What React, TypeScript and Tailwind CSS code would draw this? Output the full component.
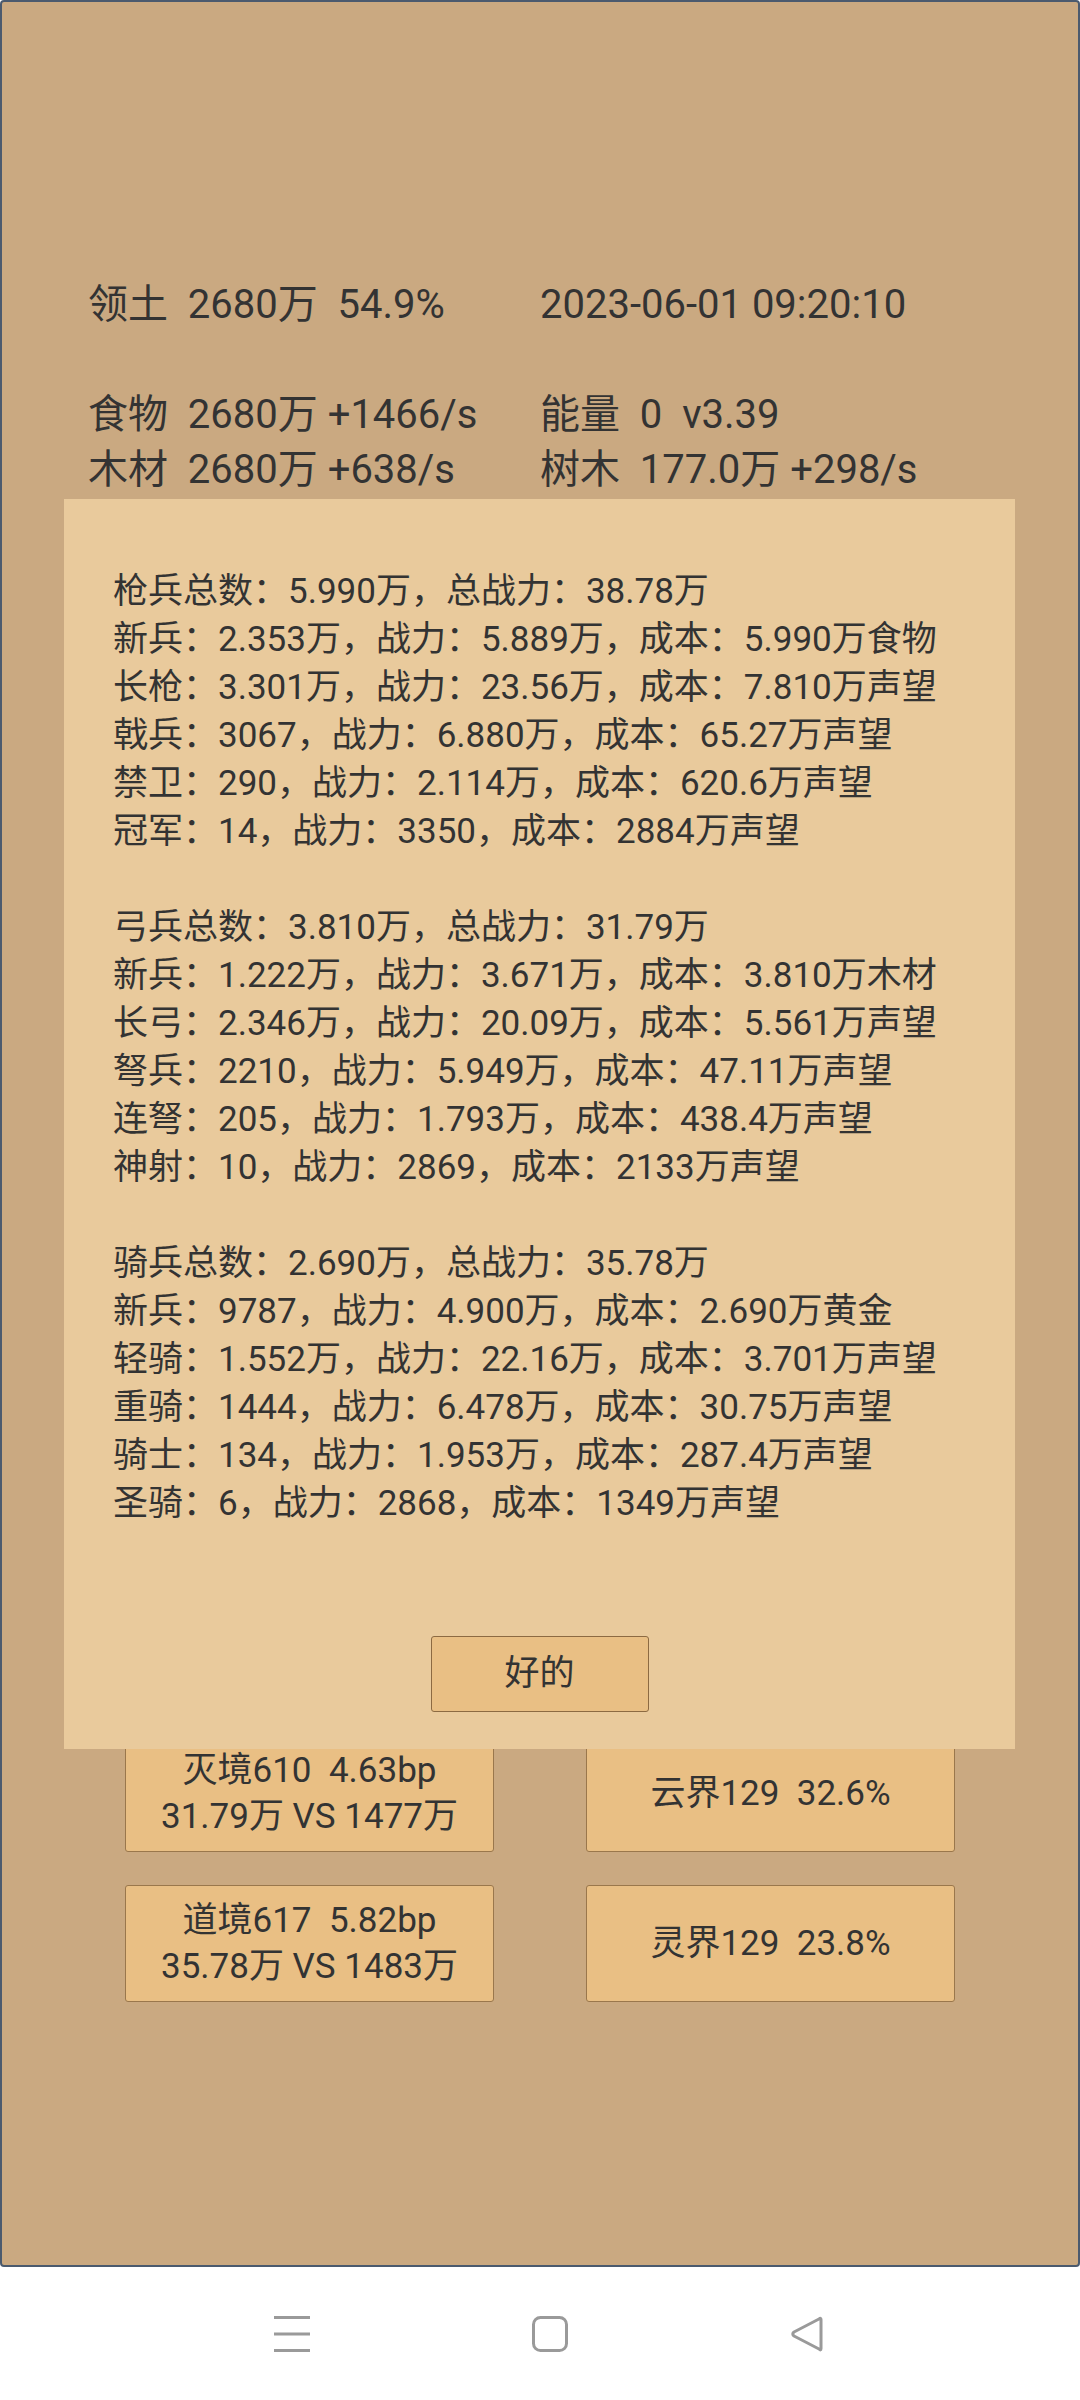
const armies = [
  [
    '枪兵总数：5.990万，总战力：38.78万',
    '新兵：2.353万，战力：5.889万，成本：5.990万食物',
    '长枪：3.301万，战力：23.56万，成本：7.810万声望',
    '戟兵：3067，战力：6.880万，成本：65.27万声望',
    '禁卫：290，战力：2.114万，成本：620.6万声望',
    '冠军：14，战力：3350，成本：2884万声望',
  ],
  [
    '弓兵总数：3.810万，总战力：31.79万',
    '新兵：1.222万，战力：3.671万，成本：3.810万木材',
    '长弓：2.346万，战力：20.09万，成本：5.561万声望',
    '弩兵：2210，战力：5.949万，成本：47.11万声望',
    '连弩：205，战力：1.793万，成本：438.4万声望',
    '神射：10，战力：2869，成本：2133万声望',
  ],
  [
    '骑兵总数：2.690万，总战力：35.78万',
    '新兵：9787，战力：4.900万，成本：2.690万黄金',
    '轻骑：1.552万，战力：22.16万，成本：3.701万声望',
    '重骑：1444，战力：6.478万，成本：30.75万声望',
    '骑士：134，战力：1.953万，成本：287.4万声望',
    '圣骑：6，战力：2868，成本：1349万声望',
  ],
];

const cards = [
  ['灭境610  4.63bp', '31.79万 VS 1477万'],
  ['云界129  32.6%'],
  ['道境617  5.82bp', '35.78万 VS 1483万'],
  ['灵界129  23.8%'],
];

export default function App() {
  return (
    <div className="flex h-[2400px] w-[1080px] flex-col bg-white font-['Roboto','Noto_Sans_CJK_SC',sans-serif] text-[#333333]">
      <div className="relative h-[2267px] shrink-0 rounded-[4px] border-2 border-[#4b5a6e] bg-[#caa981]">
        {/* resource stats */}
        <div className="grid grid-cols-[452px_1fr] whitespace-pre pl-[86px] pt-[275px] text-[40px] leading-[55px]">
          <div>领土  2680万  54.9%</div>
          <div>2023-06-01 09:20:10</div>
          <div className="h-[55px]" />
          <div className="h-[55px]" />
          <div>食物  2680万 +1466/s</div>
          <div>能量  0  v3.39</div>
          <div>木材  2680万 +638/s</div>
          <div>树木  177.0万 +298/s</div>
        </div>

        {/* realm cards */}
        <div className="mt-[1238px] grid grid-cols-[369px_369px] gap-x-[92px] gap-y-[33px] pl-[123px] text-[35px] leading-[46px]">
          {cards.map((lines, i) => (
            <div
              key={i}
              className="flex h-[117px] flex-col items-center justify-center whitespace-pre rounded-[3px] border border-[#9a774c] bg-[#e9bf84]"
            >
              {lines.map((l) => (
                <div key={l}>{l}</div>
              ))}
            </div>
          ))}
        </div>

        {/* army dialog */}
        <div className="absolute left-[62px] top-[497px] flex h-[1250px] w-[951px] flex-col bg-[#e9ca9c] pl-[49px] pt-[69px]">
          <div className="flex flex-col gap-[48px] text-[35px] leading-[48px]">
            {armies.map((group, i) => (
              <div key={i}>
                {group.map((line) => (
                  <div key={line}>{line}</div>
                ))}
              </div>
            ))}
          </div>
          <button className="mb-[37px] ml-[-49px] mt-auto flex h-[76px] w-[218px] items-center justify-center self-center rounded-[3px] border border-[#8c6a42] bg-[#e9bf84] text-[35px]">
            好的
          </button>
        </div>
      </div>

      {/* system nav bar */}
      <div className="flex flex-1 items-center gap-[222px] pl-[274px]">
        <svg width="36" height="36" viewBox="0 0 36 36">
          <rect x="0" y="0" width="36" height="3" fill="#9a9a9a" />
          <rect x="0" y="16.5" width="36" height="3" fill="#9a9a9a" />
          <rect x="0" y="33" width="36" height="3" fill="#9a9a9a" />
        </svg>
        <svg width="36" height="36" viewBox="0 0 36 36">
          <rect x="1.5" y="1.5" width="33" height="33" rx="7" fill="none" stroke="#9a9a9a" strokeWidth="3" />
        </svg>
        <svg width="36" height="36" viewBox="0 0 36 36">
          <path
            d="M31 3.5 L31 32.5 Q31 35 29 33 L4 20 Q1.5 18 4 16 L29 3 Q31 1.5 31 3.5 Z"
            fill="none"
            stroke="#9a9a9a"
            strokeWidth="3"
            strokeLinejoin="round"
          />
        </svg>
      </div>
    </div>
  );
}
